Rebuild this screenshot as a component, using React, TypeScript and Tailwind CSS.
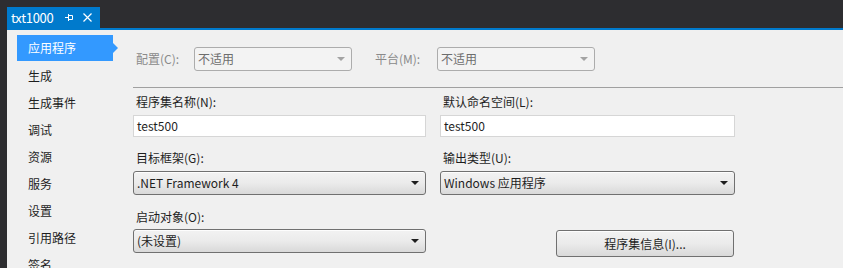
import type { ReactNode } from 'react';

const font = { fontFamily: '"Noto Sans CJK SC", "Noto Sans", sans-serif' };

const navItems = ['应用程序', '生成', '生成事件', '调试', '资源', '服务', '设置', '引用路径', '签名'];

function Arrow({ color }: { color: string }) {
    return (
        <svg width="8" height="4" viewBox="0 0 8 4" className="shrink-0">
            <path d="M0 0H8L4 4Z" fill={color} />
        </svg>
    );
}

function Select({ value, disabled, className }: { value: string; disabled?: boolean; className: string }) {
    if (disabled) {
        return (
            <div className={`h-[24px] shrink-0 flex items-center justify-between pl-[3px] pr-[6px] rounded-[3px] border border-[#acacac] bg-[#f3f3f3] text-[#6d6d6d] ${className}`}>
                <span>{value}</span>
                <Arrow color="#a3a3a3" />
            </div>
        );
    }
    return (
        <div className={`h-[24px] shrink-0 flex items-center justify-between pl-[3px] pr-[6px] rounded-[3px] border border-[#707070] bg-gradient-to-b from-[#f2f2f2] via-[#ebebeb] to-[#d9d9d9] text-[#1e1e1e] shadow-[inset_0_1px_0_#fdfdfd] ${className}`}>
            <span>{value}</span>
            <Arrow color="#1e1e1e" />
        </div>
    );
}

function Field({ label, children }: { label: string; children: ReactNode }) {
    return (
        <div className="flex flex-col">
            <div className="h-[16px] leading-[16px] pl-[3px] text-[#1e1e1e]">{label}</div>
            {children}
        </div>
    );
}

function TextBox({ value }: { value: string }) {
    return (
        <div className="mt-[5px] h-[22px] flex items-center pl-[3px] bg-white border border-[#d6d6d6] text-[#1e1e1e]">
            {value}
        </div>
    );
}

export default function App() {
    return (
        <div className="w-[843px] h-[268px] overflow-hidden bg-[#2d2d30] flex flex-col pl-[7px] text-[12px]" style={font}>
            <div className="h-[28px] shrink-0 flex items-end">
                <div className="h-[21px] w-[93px] bg-[#007acc] flex items-center pl-[4px] text-white text-[13px]">
                    <span className="tracking-[-0.3px]">txt1000</span>
                    <svg width="9" height="9" viewBox="0 0 9 9" className="ml-[12px]">
                        <path d="M0 4.5H3M3.5 1V8M3.5 2.5H7.5V6.5H3.5" stroke="white" strokeWidth="1" fill="none" />
                    </svg>
                    <svg width="9" height="9" viewBox="0 0 9 9" className="ml-[9px]">
                        <path d="M0.5 0.5L8.5 8.5M8.5 0.5L0.5 8.5" stroke="white" strokeWidth="1.2" />
                    </svg>
                </div>
            </div>
            <div className="h-[2px] shrink-0 bg-[#007acc]" />
            <div className="flex-1 min-h-0 overflow-hidden bg-[#f0f0f0] flex">
                {/* left nav */}
                <div className="w-[126px] shrink-0 pt-[5px] pl-[10px]">
                    {navItems.map((item, i) =>
                        i === 0 ? (
                            <div key={item} className="relative h-[27px] w-[96px] pb-[1px]">
                                <div className="h-[26px] bg-[#3399ff] text-white flex items-center pl-[11px]">{item}</div>
                                <div className="absolute left-[96px] top-[8px] w-0 h-0 border-y-[5px] border-y-transparent border-l-[5px] border-l-[#3399ff]" />
                            </div>
                        ) : (
                            <div key={item} className="h-[27px] flex items-center pl-[11px] text-[#1e1e1e]">{item}</div>
                        )
                    )}
                </div>

                {/* content */}
                <div className="flex-1 flex flex-col">
                    <div className="mt-[17px] h-[24px] shrink-0 flex items-center">
                        <span className="w-[61px] pl-[3px] text-[#8a8a8a]">配置(C):</span>
                        <Select value="不适用" disabled className="w-[158px]" />
                        <span className="ml-[23px] w-[62px] text-[#8a8a8a]">平台(M):</span>
                        <Select value="不适用" disabled className="w-[158px]" />
                    </div>
                    <div className="mt-[16px] h-px shrink-0 bg-[#a0a0a0]" />

                    <div className="mt-[6px] shrink-0 grid grid-cols-[293px_295px] gap-x-[14px]">
                        <Field label="程序集名称(N):">
                            <TextBox value="test500" />
                        </Field>
                        <Field label="默认命名空间(L):">
                            <TextBox value="test500" />
                        </Field>
                    </div>

                    <div className="mt-[13px] shrink-0 grid grid-cols-[293px_295px] gap-x-[14px]">
                        <Field label="目标框架(G):">
                            <Select value=".NET Framework 4" className="mt-[5px] w-full" />
                        </Field>
                        <Field label="输出类型(U):">
                            <Select value="Windows 应用程序" className="mt-[5px] w-full" />
                        </Field>
                    </div>

                    <div className="mt-[14px] shrink-0 grid grid-cols-[293px_295px] gap-x-[14px]">
                        <Field label="启动对象(O):">
                            <Select value="(未设置)" className="mt-[4px] w-full" />
                        </Field>
                        <div className="flex items-end">
                            <button className="ml-[116px] w-[178px] h-[27px] mb-[-4px] rounded-[3px] border border-[#707070] bg-gradient-to-b from-[#f2f2f2] via-[#ebebeb] to-[#d9d9d9] shadow-[inset_0_1px_0_#fdfdfd] text-[#1e1e1e] text-[12px]">
                                程序集信息(I)...
                            </button>
                        </div>
                    </div>
                </div>
            </div>
        </div>
    );
}
